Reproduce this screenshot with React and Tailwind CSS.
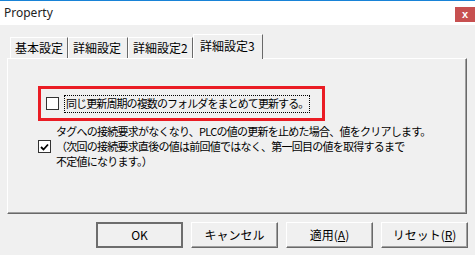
import React from "react";

const jp = { fontFamily: '"Noto Sans CJK JP", "Noto Sans", sans-serif' };

function Tab({ label, active }) {
  if (active) {
    return (
      <div className="relative z-10 -mx-[2px] h-[25px] -mb-[1px] px-[6px] bg-[#f0f0f0] border-t border-l border-white border-r border-r-[#696969] flex items-start pt-[2px] text-[12px] text-black leading-[18px]" style={jp}>
        {label}
      </div>
    );
  }
  return (
    <div className="h-[21px] px-[4px] bg-[#f0f0f0] border-t border-l border-white border-r border-r-[#696969] flex items-start pt-[1px] text-[12px] text-black leading-[18px]" style={jp}>
      {label}
    </div>
  );
}

function Btn({ children, def, w = "w-[87px]" }) {
  return (
    <div className={`${w} h-[26px] flex items-center justify-center text-[12px] text-black bg-[#f0f0f0] ${def ? "border-2 border-[#6d6d6d]" : "border border-t-white border-l-white border-r-[#696969] border-b-[#696969] shadow-[inset_-1px_-1px_0_#a0a0a0]"}`} style={jp}>
      {children}
    </div>
  );
}

export default function App() {
  return (
    <div className="w-[475px] h-[255px] bg-[#f0f0f0] flex flex-col overflow-hidden">
      <div className="h-[25px] bg-white border-t border-[#1883d7] flex items-start justify-between">
        <div className="pl-[4px] pt-[3px] text-[12px] text-[#222]" style={{ fontFamily: '"Noto Sans", sans-serif' }}>Property</div>
        <div className="mt-[6px] w-[20px] h-[15px] bg-[#c75050] flex items-center justify-center text-white text-[11px] font-bold leading-none" style={{ fontFamily: '"Liberation Sans", sans-serif' }}>x</div>
      </div>
      <div className="px-[7px] pt-[8px] flex flex-col">
        <div className="flex items-end pl-[3px] h-[25px]">
          <div className="w-[58px] flex"><div className="w-full"><Tab label="基本設定" /></div></div>
          <div className="w-[60px] flex"><div className="w-full"><Tab label="詳細設定" /></div></div>
          <div className="w-[65px] flex"><div className="w-full"><Tab label="詳細設定2" /></div></div>
          <div className="w-[66px] ml-[2px] flex"><div className="w-full"><Tab label="詳細設定3" active /></div></div>
        </div>
        <div className="w-[460px] h-[156px] border-t border-l border-white border-r border-b border-r-[#696969] border-b-[#696969] shadow-[inset_-1px_-1px_0_#a0a0a0] pl-[30px] pt-[27px]">
          <div className="w-[287px] h-[35px] border-[3px] border-[#ea1c24] flex items-center pl-[5px]">
            <div className="w-[13px] h-[13px] border border-[#333] bg-white shrink-0"></div>
            <div className="ml-[5px] h-[18px] border border-dotted border-black flex items-center px-[1px] text-[11px] tracking-[-0.9px] text-black whitespace-nowrap" style={jp}>
              同じ更新周期の複数のフォルダをまとめて更新する。
            </div>
          </div>
          <div className="flex items-center mt-[3px]">
            <div className="w-[13px] h-[13px] border border-[#333] bg-white shrink-0 flex items-center justify-center">
              <svg width="9" height="8" viewBox="0 0 9 8"><path d="M1 4 L3.5 6.5 L8 1.5" stroke="black" strokeWidth="1.8" fill="none" /></svg>
            </div>
            <div className="ml-[5px] text-[11px] leading-[15px] tracking-[-0.75px] text-black whitespace-nowrap" style={jp}>
              <div>タグへの接続要求がなくなり、PLCの値の更新を止めた場合、値をクリアします。</div>
              <div>（次回の接続要求直後の値は前回値ではなく、第一回目の値を取得するまで</div>
              <div>不定値になります。）</div>
            </div>
          </div>
        </div>
        <div className="flex justify-end gap-[8px] mt-[8px] pr-[0px]">
          <Btn def>OK</Btn>
          <Btn>キャンセル</Btn>
          <Btn>適用(<span className="underline">A</span>)</Btn>
          <Btn>リセット(<span className="underline">R</span>)</Btn>
        </div>
      </div>
    </div>
  );
}
